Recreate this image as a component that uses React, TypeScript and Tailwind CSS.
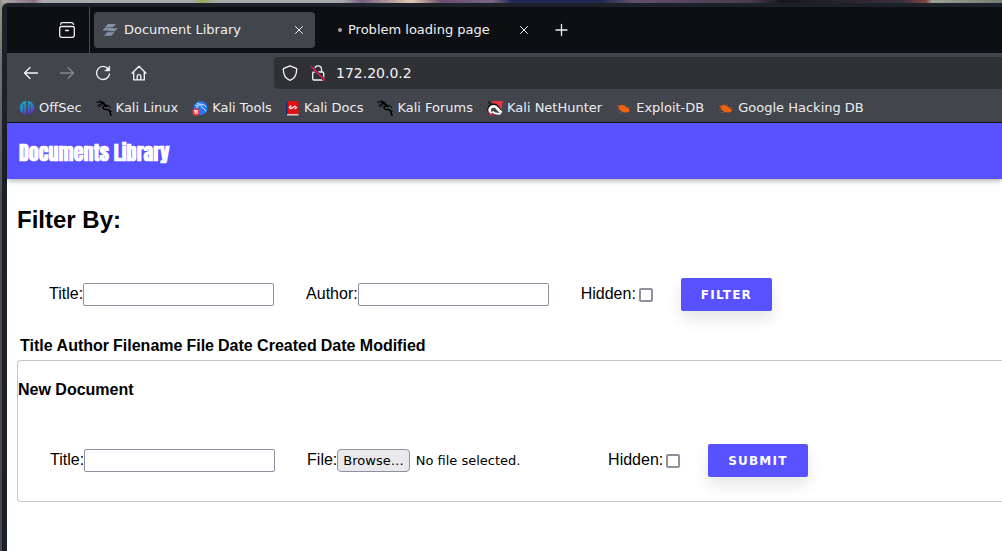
import { useRef, useState, type ReactNode } from "react";

const stroke = {
  fill: "none",
  stroke: "currentColor",
  strokeWidth: 1.3,
  strokeLinecap: "round",
  strokeLinejoin: "round",
} as const;

function DragonIcon() {
  return (
    <svg viewBox="0 0 16 16" className="size-4 text-black" {...stroke} strokeWidth={1}>
      <path d="M0.5 2.2 6 2.200 9.500 4.400M1.500 5.600 5 4M3.500 .8 8 2.400M3 6.800 6 5" />
      <path d="M5.500 3.200C8 3.600 9 4.600 8.400 6 7 6.400 6.400 8 7.800 9 9.600 10.200 12.400 8.600 13.600 11L15 15.200" strokeWidth={1.500} />
      <path d="M8.400 5.600 12.400 5.200 14.800 7.800M9 6.200 11.600 6.800M13 10.400 15.400 11.400" />
    </svg>
  );
}

function OffSecIcon() {
  return (
    <svg viewBox="0 0 16 16" className="size-4">
      <defs>
        <linearGradient id="offsec" gradientUnits="userSpaceOnUse" x1="4" y1="1" x2="10" y2="15">
          <stop offset="0" stopColor="#12a8b4" />
          <stop offset="0.5" stopColor="#2a7fc8" />
          <stop offset="1" stopColor="#6a20e0" />
        </linearGradient>
      </defs>
      <path
        fill="url(#offsec)"
        d="M7.200.8V12.500L6 15 4 13.800C2 12.600.7 10.600.7 8 .7 4.500 3.500 1.200 7.200.8ZM8.800.8C12.500 1.200 15.300 4.500 15.300 8 15.300 10.600 14 12.600 12 13.800L10 15 8.800 12.500Z"
      />
      <path d="M4.800 4V14M11.200 4V14" stroke="#42454c" strokeWidth=".7" />
    </svg>
  );
}

function ToolsIcon() {
  return (
    <svg viewBox="0 0 16 16" className="size-4">
      <circle cx="8.500" cy="8" r="7" fill="#2678f0" />
      <path d="M3 5.500 8 4.600C10 5 9 6.800 9.800 7.600 11.500 8.300 13 9 13.800 11.500M5 3.500 9 4.200 12.500 5.200 14 7M4 7.500 7 6" fill="none" stroke="#dcecff" strokeWidth=".9" />
      <circle cx="4" cy="12" r="3.700" fill="#e8353c" />
      <path d="M2 10.700H6M3.200 10.700V14M5 10.700V14" stroke="#fff" fill="none" />
    </svg>
  );
}

function DocsIcon() {
  return (
    <svg viewBox="0 0 14 16" className="h-4 w-3.5">
      <path d="M0 1H2V15H0Z" fill="#12306e" />
      <path d="M1.500 1H12.500V14H1.500Z" fill="#e01212" />
      <path d="M1 14H12.500V15.500H1Z" fill="#d8cfc8" />
      <path d="M5.200 5.500 3.300 7.400 5.200 9M8.600 9.200 10.500 7.400 8.600 5.800M5 7.600C7 9.600 7 5.400 9 7.200" stroke="#fff" strokeWidth="1.100" fill="none" />
    </svg>
  );
}

function NetHunterIcon() {
  return (
    <svg viewBox="0 0 16 16" className="size-4">
      <path d="M4 1H15.800L14 13Z" fill="#ee3340" />
      <path d="M.8 1.500 4 4M1 6 4 5" stroke="#111" strokeWidth="1.200" />
      <path d="M3 13C-.5 9 3 5 7 4.800 11.500 5 11 9 14.500 11.500" fill="none" stroke="#111" strokeWidth="2.500" />
      <path d="M4.500 13.500C.8 10.500 3 6.200 7 6.200 10.500 6.400 10.500 10.500 14.800 12.500" fill="none" stroke="#fff" strokeWidth="2.600" />
      <path d="M5.500 11.500C7 13.500 10 14 13.500 13.800" fill="none" stroke="#fff" strokeWidth="2" />
      <path d="M1 11.500 4 15H8" fill="none" stroke="#d82440" strokeWidth="1.200" />
    </svg>
  );
}

function BugIcon() {
  return (
    <svg viewBox="0 0 16 16" className="size-4">
      <path d="M2 6.800C3 5 6 4.600 8.500 5.800L12 8.200 14 10.500 12.500 12C9 13 6 12.500 4 10Z" fill="#f0620f" />
      <path d="M.5 5.200 4 7M1 9.500 5 9M3 13 7 11.500M5.500 3.200 7 6M9 4 9.500 6.500M11 8 15 7.600M9.500 11.500 11 13.500" fill="none" stroke="#b85a28" strokeWidth=".6" />
    </svg>
  );
}

const bookmarks: { name: string; icon: ReactNode }[] = [
  { name: "OffSec", icon: <OffSecIcon /> },
  { name: "Kali Linux", icon: <DragonIcon /> },
  { name: "Kali Tools", icon: <ToolsIcon /> },
  { name: "Kali Docs", icon: <DocsIcon /> },
  { name: "Kali Forums", icon: <DragonIcon /> },
  { name: "Kali NetHunter", icon: <NetHunterIcon /> },
  { name: "Exploit-DB", icon: <BugIcon /> },
  { name: "Google Hacking DB", icon: <BugIcon /> },
];

function CloseIcon() {
  return (
    <svg viewBox="0 0 10 10" className="size-2.5" {...stroke} strokeWidth={1}>
      <path d="M1.500 1.500 8.500 8.500M8.500 1.500 1.500 8.500" />
    </svg>
  );
}

function TabBar() {
  return (
    <div className="flex h-[46px] items-center bg-[#0e0f12] text-[#f0f0f2]">
      <div className="flex h-full w-[83px] items-center justify-end self-stretch border-r border-[#4a4b50] pr-3.5">
        <button aria-label="View tabs" className="flex">
          <svg viewBox="0 0 16 18" className="h-[18px] w-4" {...stroke}>
            <path d="M2.500 5.500H13.500C14.700 5.500 15.300 6.100 15.300 7.200V14C15.300 15.500 14.700 16.300 13.200 16.300H2.800C1.300 16.300.7 15.500.7 14V7.200C.7 6.100 1.300 5.500 2.500 5.500ZM6.500 9.500H9.500M1.500 3.400C1.700 2.200 2.500 1.700 3.500 1.700H12.500C13.500 1.700 14.300 2.200 14.500 3.400" />
          </svg>
        </button>
      </div>
      <div className="ml-1 flex h-9 w-[221px] items-center rounded bg-[#42454c] pr-[11px] pl-2">
        <svg viewBox="0 0 16 16" className="size-4 fill-[#8592a3]">
          <path d="M6 2H14L11.200 5H3.200ZM3 5.600H9L11 6.300H15.800L12.800 9.300H8.500L6 8.600H.5ZM5 10.200H12.500L9.500 13.800H2Z" />
        </svg>
        <span className="ml-1.5 grow">Document Library</span>
        <button aria-label="Close Document Library" className="flex"><CloseIcon /></button>
      </div>
      <div className="flex w-[225px] items-center pr-[11px] pl-[23px]">
        <span className="size-1 rounded-full bg-[#a8a8ac]" />
        <span className="ml-1.5 grow">Problem loading page</span>
        <button aria-label="Close Problem loading page" className="flex"><CloseIcon /></button>
      </div>
      <button aria-label="New tab" className="ml-3.5 flex">
        <svg viewBox="0 0 14 14" className="size-3.5" {...stroke}><path d="M7.500 1.500V12.500M2 7H13" /></svg>
      </button>
    </div>
  );
}

function NavBar() {
  return (
    <div className="flex h-10 items-center pl-4 text-[#f4f4f6]">
      <div className="flex w-[251px] items-center gap-5">
        <button aria-label="Back">
          <svg viewBox="0 0 16 16" className="size-4" {...stroke}><path d="M1.500 8H14.500M7 2.500 1.500 8 7 13.500" /></svg>
        </button>
        <button aria-label="Forward" className="text-[#85868b]">
          <svg viewBox="0 0 16 16" className="size-4" {...stroke}><path d="M1.500 8H14.500M9 2.500 14.500 8 9 13.500" /></svg>
        </button>
        <button aria-label="Reload">
          <svg viewBox="0 0 16 16" className="size-4" {...stroke}>
            <path d="M13.200 4A6.500 6.500 0 1 0 14.500 8.800" />
            <path d="M14.800 1V6H9.800Z" fill="currentColor" strokeWidth=".4" />
          </svg>
        </button>
        <button aria-label="Home">
          <svg viewBox="0 0 16 16" className="size-4" {...stroke}>
            <path d="M1 8.200 8 1.200 15 8.200M2.700 7V14.900H13.300V7M6.200 14.500V11C6.200 9.200 9.800 9.200 9.800 11V14.500" />
          </svg>
        </button>
      </div>
      <div className="flex h-8 grow items-center rounded-l bg-[#303135] pl-2">
        <svg viewBox="0 0 16 16" className="size-4" {...stroke}>
          <path d="M8 .8 14.200 3.400C14.500 3.500 14.700 3.800 14.700 4.200 14.700 9 12.600 13.600 8 15.300 3.400 13.600 1.300 9 1.300 4.200 1.300 3.800 1.500 3.500 1.800 3.400Z" />
        </svg>
        <svg viewBox="0 0 16 16" className="ml-3 size-4" {...stroke}>
          <path d="M4.500 7V4.200C4.500 -.2 11.500 -.2 11.500 4.200V7M4 7H12.500Q13.700 7 13.700 8.200V13.800Q13.700 15 12.500 15H4Q2.700 15 2.700 13.800V8.200Q2.700 7 4 7Z" />
          <path d="M1.500 1.800 14.500 15" stroke="#303135" strokeWidth="3" />
          <path d="M1.500 1.800 14.500 15" stroke="#f01850" strokeWidth="1.500" />
        </svg>
        <input aria-label="Address" defaultValue="172.20.0.2" className="ml-2.5 min-w-0 grow bg-transparent text-sm outline-none" />
      </div>
    </div>
  );
}

const labelledInput = "h-[23px] w-[191px] rounded-xs border border-[#8f8f9d] bg-white px-1";
const checkbox = "ml-[3px] size-3.5 appearance-none rounded-xs border-2 border-[#8f8f9d] bg-white checked:bg-[#5851ff]";
const action =
  "-ml-1 h-[33px] rounded-xs bg-[#5851ff] px-5 font-['DejaVu_Sans',sans-serif] text-xs font-bold tracking-widest text-white uppercase shadow-[0_8px_15px_rgba(0,0,0,0.1)]";

function FilterForm() {
  return (
    <form className="flex h-[33px] items-center gap-8 pl-8" onSubmit={(e) => e.preventDefault()}>
      <div className="flex items-center">
        <label htmlFor="filter-title" className="pb-0.5">Title:</label>
        <input id="filter-title" className={labelledInput} />
      </div>
      <div className="flex items-center">
        <label htmlFor="filter-author" className="pb-0.5">Author:</label>
        <input id="filter-author" className={labelledInput} />
      </div>
      <div className="flex items-center">
        <label htmlFor="filter-hidden" className="pb-0.5">Hidden:</label>
        <input id="filter-hidden" type="checkbox" className={checkbox} />
      </div>
      <button className={action}>Filter</button>
    </form>
  );
}

function NewDocumentForm() {
  const picker = useRef<HTMLInputElement>(null);
  const [fileName, setFileName] = useState("No file selected.");
  return (
    <form className="flex h-[33px] items-center gap-8 pl-8" onSubmit={(e) => e.preventDefault()}>
      <div className="flex items-center">
        <label htmlFor="new-title" className="pb-0.5">Title:</label>
        <input id="new-title" className={labelledInput} />
      </div>
      <div className="flex w-[269px] items-center">
        <label htmlFor="new-file" className="pb-0.5">File:</label>
        <input
          ref={picker}
          id="new-file"
          type="file"
          className="hidden"
          onChange={(e) => setFileName(e.target.files?.[0]?.name ?? "No file selected.")}
        />
        <button
          type="button"
          onClick={() => picker.current?.click()}
          className="h-[23px] rounded border border-[#8f8f9d] bg-[#e9e9ed] px-[5px] font-['DejaVu_Sans',sans-serif] text-[13px] leading-5"
        >
          Browse…
        </button>
        <span className="ml-1.5 font-['DejaVu_Sans',sans-serif] text-[13px]">{fileName}</span>
      </div>
      <div className="flex items-center">
        <label htmlFor="new-hidden" className="pb-0.5">Hidden:</label>
        <input id="new-hidden" type="checkbox" className={checkbox} />
      </div>
      <button className={action}>Submit</button>
    </form>
  );
}

const columns = ["Title", "Author", "Filename", "File", "Date Created", "Date Modified"];

export default function App() {
  return (
    <div className="flex min-h-screen flex-col overflow-hidden bg-[linear-gradient(180deg,#96918d_0px,#77716f_60px,#514c57_200px,#494653_100%)] pl-0.5">
      <div className="h-[3px] bg-[linear-gradient(90deg,#aaa_0px,#8b7182_32px,#aaa_40px,#aaa_190px,#91aa58_200px,#aaa_214px,#aaa_340px,#755f80_360px,#dfcab0_410px,#674f6c_440px,#796583_490px,#222955_510px,#222955_600px,#624f68_630px,#483a50_750px,#18151c_780px,#39303d_900px,#7c463d_924px,#9ba096_930px,#747d70_1000px)]" />
      <div className="flex grow flex-col rounded-tl-md border-t-4 border-l-[5px] border-[#1c2028] bg-[#0e0f12] font-['DejaVu_Sans',sans-serif] text-[13px]">
        <TabBar />
        <div className="border-b border-[#111216] bg-[#42454c]">
          <NavBar />
          <nav className="flex h-[29px] items-center gap-3.5 pl-3 whitespace-nowrap text-[#ededf0]">
            {bookmarks.map((b) => (
              <a key={b.name} href="#" className="flex shrink-0 items-center gap-1">
                {b.icon}
                {b.name}
              </a>
            ))}
          </nav>
        </div>
        <div className="grow bg-white font-['Liberation_Sans',sans-serif] text-base text-black">
          <header className="flex h-14 items-center bg-[#5851ff] pl-3 shadow-[0_2px_5px_rgba(0,0,0,0.3)]">
            <h1 className="pt-1 font-['Impact','Anton','Liberation_Sans_Narrow','Liberation_Sans',sans-serif] text-xl font-bold text-white">
              Documents Library
            </h1>
          </header>
          <main className="pt-[25px] pl-2.5">
            <h2 className="mb-[42px] text-2xl font-bold">Filter By:</h2>
            <FilterForm />
            <table className="mt-[22px] border-separate border-spacing-0.5 text-left leading-5">
              <thead>
                <tr>
                  {columns.map((c) => (
                    <th key={c} className="p-px">{c}</th>
                  ))}
                </tr>
              </thead>
            </table>
            <section className="mt-px rounded-l border border-r-0 border-[#c8c8c8] pt-[17px] pb-6">
              <h3 className="mb-[42px] font-bold">New Document</h3>
              <NewDocumentForm />
            </section>
          </main>
        </div>
      </div>
    </div>
  );
}
